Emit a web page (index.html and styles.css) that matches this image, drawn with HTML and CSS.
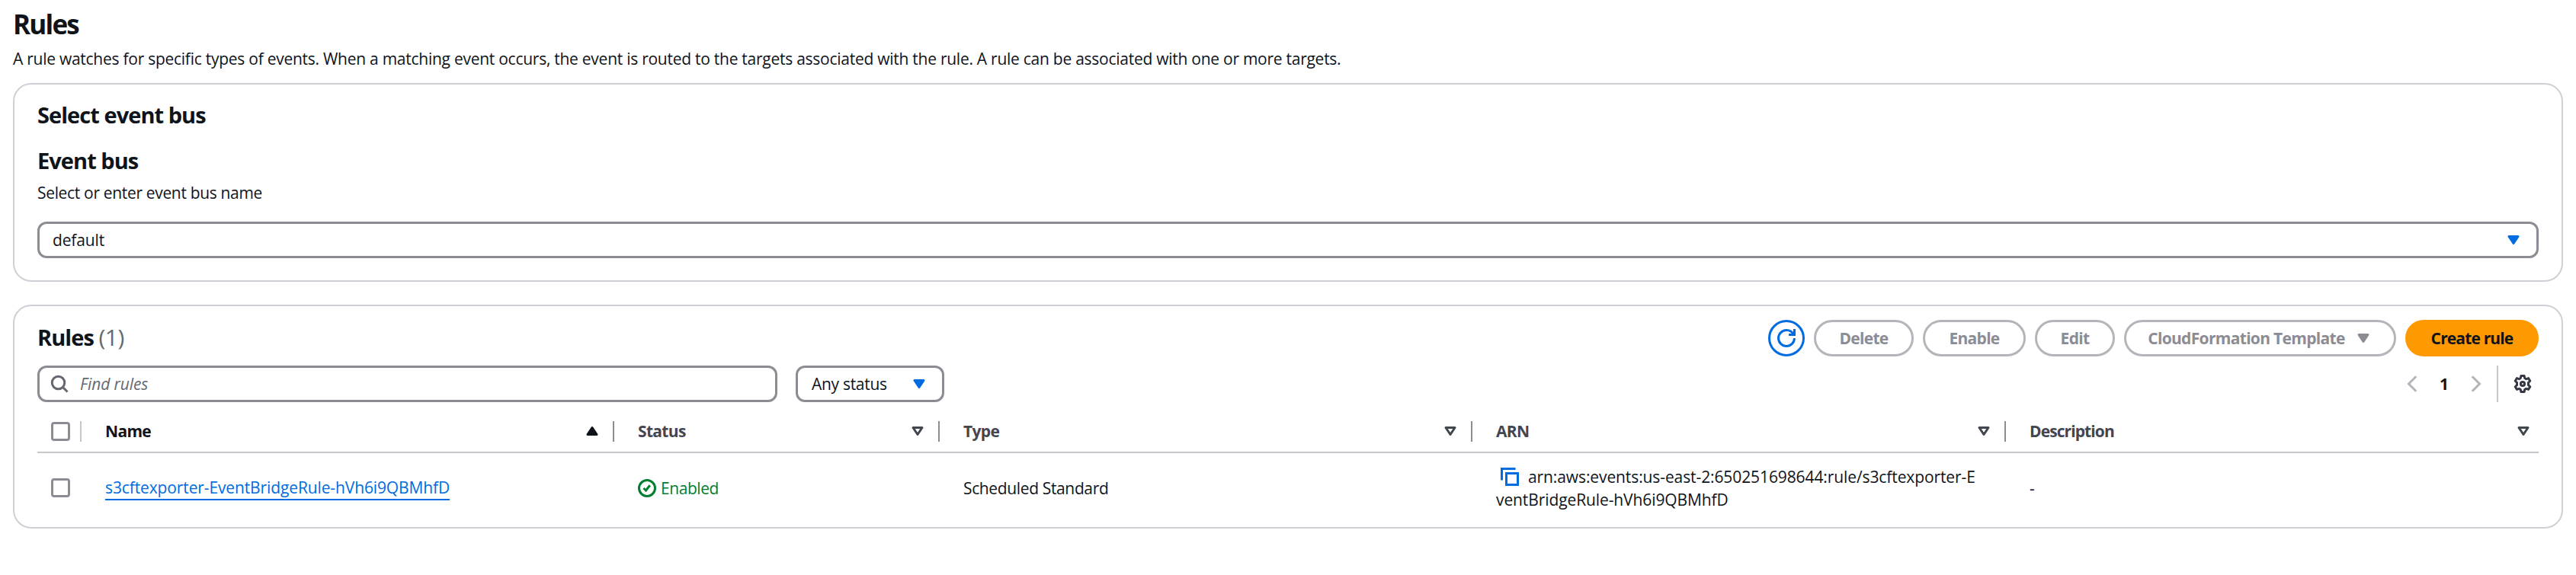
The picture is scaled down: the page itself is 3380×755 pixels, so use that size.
FILE: index.html
```html
<!DOCTYPE html>
<html lang="en">
<head>
<meta charset="utf-8">
<title>Rules</title>
<link rel="stylesheet" href="styles.css">
</head>
<body>
<svg class="defs" width="0" height="0">
  <symbol id="caret" viewBox="0 0 16 16"><path d="M4 5h8l-4 6-4-6Z" fill="currentColor" stroke="currentColor" stroke-width="2" stroke-linejoin="round"/></symbol>
  <symbol id="caret-up" viewBox="0 0 16 16"><path d="M4 11h8L8 5l-4 6Z" fill="currentColor" stroke="currentColor" stroke-width="2" stroke-linejoin="round"/></symbol>
  <symbol id="sort" viewBox="0 0 16 16"><path d="M4 5h8l-4 6-4-6Z" fill="none" stroke="currentColor" stroke-width="2" stroke-linejoin="round"/></symbol>
</svg>
<main class="page">
  <h1 class="title">Rules</h1>
  <p class="lead">A rule watches for specific types of events. When a matching event occurs, the event is routed to the targets associated with the rule. A rule can be associated with one or more targets.</p>

  <section class="panel bus">
    <h2 class="heading">Select event bus</h2>
    <h3 class="heading sub">Event bus</h3>
    <p class="hint">Select or enter event bus name</p>
    <div class="field select-bus"><span class="val">default</span><svg class="icon blue"><use href="#caret"/></svg></div>
  </section>

  <section class="panel rules">
    <header class="bar">
      <h2 class="heading rules-title">Rules <span class="count">(1)</span></h2>
      <div class="actions">
        <button class="btn refresh"><svg class="icon" viewBox="0 0 16 16" fill="none" stroke="currentColor" stroke-width="2"><path d="M15 8c0 3.870-3.130 7-7 7s-7-3.130-7-7 3.130-7 7-7c2.790 0 5.200 1.630 6.330 4"/><path d="M10 5h5V0"/></svg></button>
        <button class="btn delete">Delete</button>
        <button class="btn enable">Enable</button>
        <button class="btn edit">Edit</button>
        <button class="btn cf"><span>CloudFormation Template</span><svg class="icon"><use href="#caret"/></svg></button>
        <button class="btn primary">Create rule</button>
      </div>
    </header>
    <div class="toolbar">
      <div class="field search"><svg class="icon" viewBox="0 0 16 16" fill="none" stroke="currentColor" stroke-width="2"><circle cx="7" cy="7" r="5.5"/><path d="m11 11 4 4"/></svg><span class="placeholder">Find rules</span></div>
      <div class="field status-filter"><span class="any">Any status</span><svg class="icon blue"><use href="#caret"/></svg></div>
      <div class="pager">
        <svg class="icon chev" viewBox="0 0 16 16" fill="none" stroke="currentColor" stroke-width="2"><path d="M11.5 1.5 5 8l6.500 6.500"/></svg>
        <b class="page-no">1</b>
        <svg class="icon chev" viewBox="0 0 16 16" fill="none" stroke="currentColor" stroke-width="2"><path d="M4.5 1.5 11 8l-6.500 6.500"/></svg>
      </div>
      <div class="prefs"><svg class="icon" viewBox="0 0 16 16" fill="none" stroke="currentColor" stroke-width="2" stroke-linejoin="round"><path d="M6.600 1h2.800l.4 2 1.300.75 2-.65 1.400 2.400L13 6.900v2.200l1.500 1.400-1.400 2.400-2-.65-1.300.75-.4 2H6.600l-.4-2-1.300-.75-2 .65-1.400-2.400L3 9.100V6.900L1.500 5.500l1.400-2.400 2 .65L6.200 3Z"/><circle cx="8" cy="8" r="1.700"/></svg></div>
    </div>
    <div class="grid head">
      <div class="cell check light"><i class="box"></i></div>
      <div class="cell dark"><span class="name">Name</span><svg class="icon"><use href="#caret-up"/></svg></div>
      <div class="cell"><span>Status</span><svg class="icon"><use href="#sort"/></svg></div>
      <div class="cell"><span>Type</span><svg class="icon"><use href="#sort"/></svg></div>
      <div class="cell"><span>ARN</span><svg class="icon"><use href="#sort"/></svg></div>
      <div class="cell last"><span class="desc">Description</span><svg class="icon"><use href="#sort"/></svg></div>
    </div>
    <div class="grid row">
      <div class="cell check"><i class="box"></i></div>
      <div class="cell"><a class="link">s3cftexporter-EventBridgeRule-hVh6i9QBMhfD</a></div>
      <div class="cell enabled"><svg class="icon" viewBox="0 0 16 16" fill="none" stroke="currentColor" stroke-width="2"><circle cx="8" cy="8" r="7"/><path d="m5 8 2 2 3.500-4.500"/></svg><span>Enabled</span></div>
      <div class="cell"><span class="type">Scheduled Standard</span></div>
      <div class="cell"><div class="arn"><svg class="icon copy" viewBox="0 0 16 16" fill="none" stroke="currentColor" stroke-width="2"><path d="M1 11V1h12"/><path d="M5 5h10v10H5z"/></svg>arn:aws:events:us-east-2:650251698644:rule/s3cftexporter-E<br>ventBridgeRule-hVh6i9QBMhfD</div></div>
      <div class="cell">-</div>
    </div>
  </section>
</main>
</body>
</html>
```
FILE: styles.css
```css
* { box-sizing: border-box; }
body { margin: 0; background: #fff; color: #0f141a; font: 21px/30px "Open Sans", "Noto Sans", sans-serif; }
h1, h2, h3, p { margin: 0; }
.defs { display: block; height: 0; }
.page { padding: 9px 17px 0; }
.title { font-size: 35px; line-height: 46px; font-weight: 700; letter-spacing: -1.8px; }
.lead { margin-top: 7px; letter-spacing: -.26px; white-space: nowrap; }
.panel { border: 2px solid #cfcfd5; border-radius: 24px; padding: 0 30px; }
.bus { height: 261px; margin-top: 17px; padding-top: 22px; }
.heading { font-size: 29px; line-height: 36px; font-weight: 700; letter-spacing: -.95px; white-space: nowrap; }
.sub { margin-top: 24px; }
.hint { margin-top: 9px; letter-spacing: -.33px; }
.icon { width: 24px; height: 24px; flex: none; display: block; overflow: visible; }
.blue { color: #006ce0; }
.field { height: 48px; border: 3px solid #8c8c94; border-radius: 12px; display: flex; align-items: center; }
.select-bus { margin-top: 23px; padding: 0 18px 0 17px; justify-content: space-between; }
.val { letter-spacing: -.15px; }
.rules { height: 294px; margin-top: 30px; padding-top: 18px; }
.bar { display: flex; justify-content: space-between; height: 48px; }
.rules-title { padding-top: 5px; }
.count { font-weight: 400; font-size: 30px; color: #656871; letter-spacing: -.5px; }
.actions { display: flex; gap: 12px; }
.btn { height: 48px; border: 3px solid #b4b4bb; border-radius: 24px; background: #fff; color: #8c8c94; font: 700 21px/30px "Open Sans", sans-serif; letter-spacing: -.7px; padding: 0; display: flex; align-items: center; justify-content: center; white-space: nowrap; }
.refresh { width: 48px; color: #006ce0; border-color: #006ce0; }
.delete { width: 131px; }
.enable { width: 135px; }
.edit { width: 105px; }
.cf { width: 357px; gap: 12px; letter-spacing: -.68px; }
.primary { width: 175px; background: #f90; border-color: #f90; color: #0f141a; letter-spacing: -.85px; }
.toolbar { display: flex; margin-top: 12px; height: 48px; }
.search { width: 971px; padding-left: 14px; gap: 15px; color: #656871; }
.placeholder { font-style: italic; letter-spacing: -.1px; }
.status-filter { width: 195px; margin-left: 24px; padding: 0 18px; justify-content: space-between; }
.any { letter-spacing: -.3px; }
.pager { margin-left: auto; display: flex; align-items: center; color: #b4b4bb; }
.page-no { width: 60px; text-align: center; color: #0f141a; }
.prefs { margin-left: 15px; border-left: 2px solid #c6c6cd; padding-left: 20px; width: 55px; display: flex; align-items: center; color: #333843; }
.grid { display: grid; grid-template-columns: 59px 699px 427px 699px 700px 698px; }
.head { height: 67px; padding-top: 11px; border-bottom: 2px solid #c6c6cd; font-weight: 700; color: #424650; }
.cell { display: flex; align-items: center; padding-left: 30px; white-space: nowrap; }
.head .cell { justify-content: space-between; padding-right: 18px; letter-spacing: -.67px; position: relative; }
.head .cell::after { content: ""; position: absolute; right: 1px; top: 14px; width: 2px; height: 27px; background: #8c8c94; }
.head .light::after { background: #c6c6cd; }
.head .last::after { display: none; }
.head .last { padding-right: 8px; }
.head .dark { color: #0f141a; }
.desc { letter-spacing: -.9px; }
.head .check, .check { padding: 0 0 0 18px; }
.box { width: 25px; height: 25px; border: 3px solid #8c8c94; border-radius: 4px; }
.row { height: 91px; }
.link { color: #006ce0; letter-spacing: -.12px; border-bottom: 2px solid #006ce0; line-height: 29px; margin-top: 2px; }
.enabled { color: #00802f; gap: 6px; letter-spacing: -.43px; }
.type { letter-spacing: -.36px; }
.arn { letter-spacing: -.1px; }
.copy { display: inline-block; vertical-align: -4px; margin: 0 12px 0 6px; color: #006ce0; }
```
